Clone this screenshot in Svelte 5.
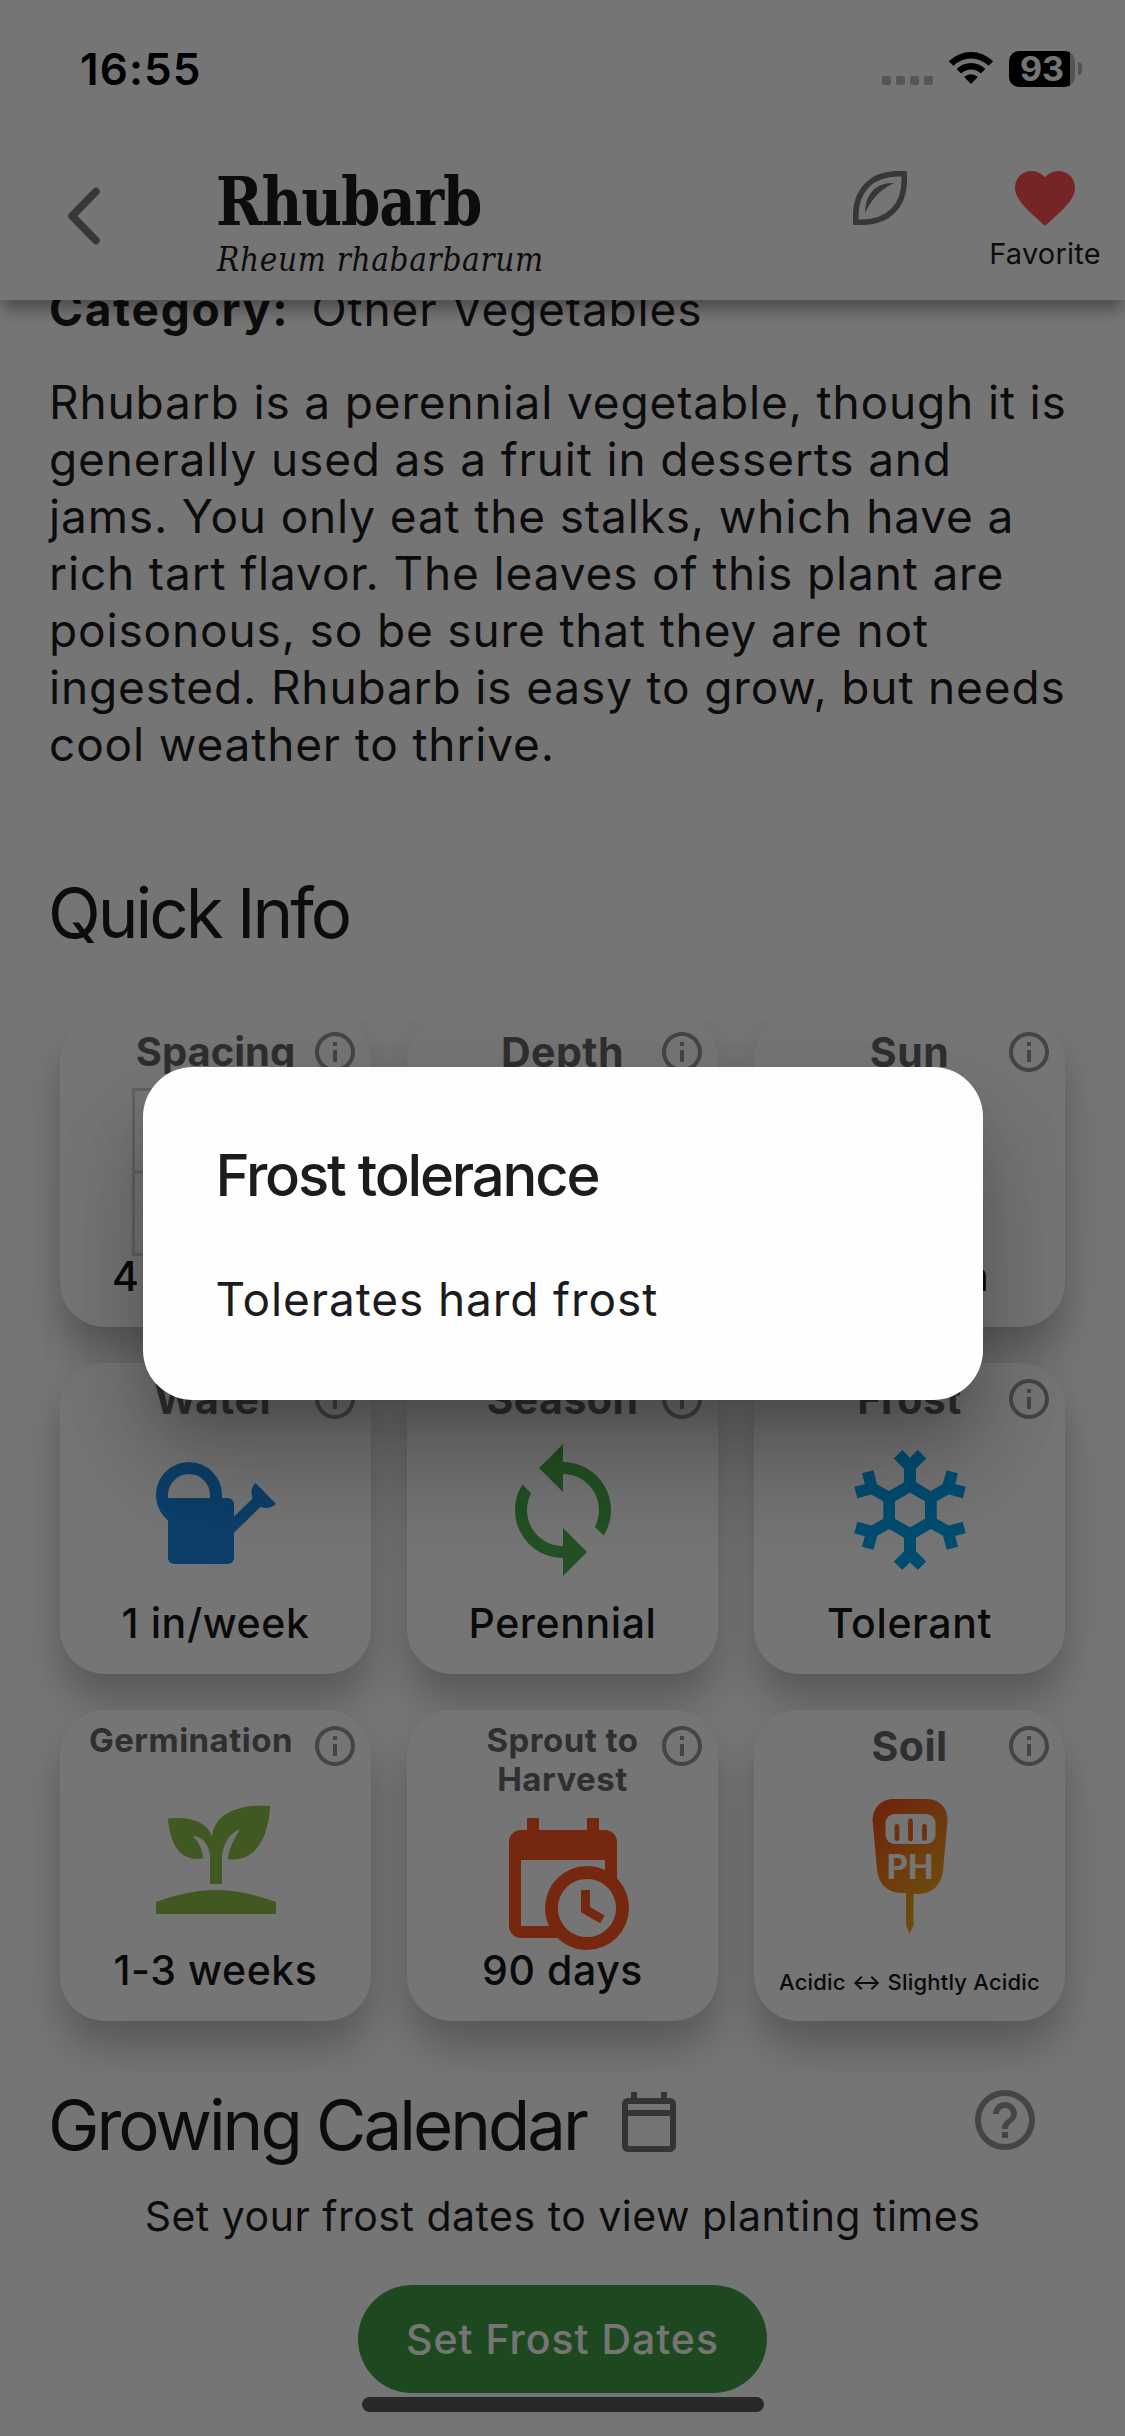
<script lang="ts">
  type Card = {
    title: string
    value: string
    icon: string
    color?: string
    small?: boolean
    tiny?: boolean
    shift?: boolean
    tight?: boolean
  }

  const cards: Card[] = [
    { title: "Spacing", value: "4 per sq ft", icon: "grid", tight: true },
    { title: "Depth", value: "", icon: "" },
    { title: "Sun", value: "Full Sun", icon: "" },
    { title: "Water", value: "1 in/week", icon: "water", color: "#1e8ae6" },
    { title: "Season", value: "Perennial", icon: "season", color: "#4caf50" },
    { title: "Frost", value: "Tolerant", icon: "frost", color: "#03a9f4" },
    { title: "Germination", value: "1-3 weeks", icon: "sprout", color: "#8bc34a", small: true, shift: true },
    { title: "Sprout to Harvest", value: "90 days", icon: "harvest", color: "#ff5722", small: true },
    { title: "Soil", value: "Acidic ↔ Slightly Acidic", icon: "ph", tiny: true },
  ]

  const paths: Record<string, string> = {
    water:
      "M7.5 4A5.5 5.5 0 0 0 4 13.74V20a1 1 0 0 0 1 1h9a1 1 0 0 0 1-1v-4.2l4.4-4.3q1.5.5 2.6-.5L18.6 7.5q-1.1 1.1-.5 2.6L15 13.1V11a1 1 0 0 0-1-1h-1v-.5A5.5 5.5 0 0 0 7.5 4M7.5 6A3.5 3.5 0 0 1 11 9.5v.5H4v-.5A3.5 3.5 0 0 1 7.5 6",
    season:
      "M12 4V1L8 5l4 4V6c3.31 0 6 2.69 6 6 0 1.01-.25 1.97-.7 2.8l1.46 1.46C19.54 15.03 20 13.57 20 12c0-4.42-3.58-8-8-8zm0 14c-3.31 0-6-2.69-6-6 0-1.01.25-1.97.7-2.8L5.24 7.74C4.46 8.97 4 10.43 4 12c0 4.42 3.58 8 8 8v3l4-4-4-4v3z",
    frost:
      "M20.79,13.95L18.46,14.57L16.46,13.44V10.56L18.46,9.43L20.79,10.05L21.31,8.12L19.54,7.65L20,5.88L18.07,5.36L17.45,7.69L15.45,8.82L13,7.38V5.12L14.71,3.41L13.29,2L12,3.29L10.71,2L9.29,3.41L11,5.12V7.38L8.5,8.82L6.5,7.69L5.92,5.36L4,5.88L4.47,7.65L2.7,8.12L3.22,10.05L5.55,9.43L7.55,10.56V13.45L5.55,14.58L3.22,13.96L2.7,15.89L4.47,16.36L4,18.12L5.93,18.64L6.55,16.31L8.55,15.18L11,16.62V18.88L9.29,20.59L10.71,22L12,20.71L13.29,22L14.7,20.59L13,18.88V16.62L15.5,15.17L17.5,16.3L18.12,18.63L20,18.12L19.53,16.35L21.3,15.88L20.79,13.95M9.5,10.56L12,9.11L14.5,10.56V13.44L12,14.89L9.5,13.44V10.56Z",
    sprout:
      "M2,22V20C2,20 7,18 12,18C17,18 22,20 22,20V22H2M11.3,9.1C10.1,5.2 4,6.1 4,6.1C4,6.1 4.2,13.9 9.9,12.7C9.5,9.8 8,9 8,9C10.8,9 11,12.4 11,12.4V17C11.3,17 11.7,17 12,17C12.3,17 12.7,17 13,17V12.8C13,12.8 13,8.9 16,7.9C16,7.9 14,10.9 14,12.9C21,13.6 21,4 21,4C21,4 12.1,3 11.3,9.1Z",
    harvest:
      "M15,13H16.5V15.82L18.94,17.23L18.19,18.53L15,16.69V13M19,8H5V19H9.67C9.24,18.09 9,17.07 9,16A7,7 0 0,1 16,9C17.07,9 18.09,9.24 19,9.67V8M5,21C3.89,21 3,20.1 3,19V5C3,3.89 3.89,3 5,3H6V1H8V3H16V1H18V3H19A2,2 0 0,1 21,5V11.1C22.24,12.36 23,14.09 23,16A7,7 0 0,1 16,23C14.09,23 12.36,22.24 11.1,21H5M16,11.15A4.85,4.85 0 0,0 11.15,16C11.15,18.68 13.32,20.85 16,20.85A4.85,4.85 0 0,0 20.85,16C20.85,13.32 18.68,11.15 16,11.15Z",
  }
</script>

<div class="screen">
  <header>
    <div class="status">
      <span class="time">16:55</span>
      <div class="signals">
        <div class="dots"><i></i><i></i><i></i><i></i></div>
        <svg class="wifi" width="46" height="34" viewBox="0 0 46 34">
          <path d="M0.8 10.2a31.5 31.5 0 0 1 44.4 0l-4.6 4.6a25 25 0 0 0-35.2 0z" />
          <path d="M8.6 18a20.4 20.4 0 0 1 28.8 0l-4.6 4.6a13.9 13.9 0 0 0-19.6 0z" />
          <path d="M16.2 26a9.8 9.8 0 0 1 13.6 0L23 33z" />
        </svg>
        <div class="battery"><span>93</span></div>
        <div class="nub"></div>
      </div>
    </div>
    <div class="nav">
      <svg class="back" width="38" height="64" viewBox="0 0 38 64">
        <path d="M32 7.500L8 32L32 56.500" fill="none" stroke="#797979" stroke-width="7.600" stroke-linecap="round" stroke-linejoin="round" />
      </svg>
      <div class="names">
        <h1>Rhubarb</h1>
        <p>Rheum rhabarbarum</p>
      </div>
      <svg class="leaf" width="54" height="54" viewBox="0 0 54 54">
        <path d="M2.9 51.1C.5 20 18 .5 51.1 2.9C53.5 34 36 53.5 2.9 51.1z" fill="none" stroke="#797979" stroke-width="5.6" />
        <path d="M12.3 41.7C12 23 23 11 41.3 12C30 17 20 25 12.3 41.7z" fill="#797979" />
      </svg>
      <div class="favorite">
        <svg width="72" height="72" viewBox="0 0 24 24">
          <path fill="#ff5252" d="M12 21.35l-1.45-1.32C5.4 15.36 2 12.28 2 8.5 2 5.42 4.42 3 7.5 3c1.74 0 3.41.81 4.5 2.09C13.09 3.81 14.76 3 16.5 3 19.58 3 22 5.42 22 8.5c0 3.78-3.4 6.86-8.55 11.54L12 21.35z" />
        </svg>
        <span>Favorite</span>
      </div>
    </div>
  </header>

  <main>
    <p class="category"><b>Category:</b><span>Other Vegetables</span></p>
    <p class="about">
      Rhubarb is a perennial vegetable, though it is<br />generally used as a fruit in desserts and<br />jams. You only eat the stalks, which have a<br />rich tart flavor. The leaves of this plant are<br />poisonous, so be sure that they are not<br />ingested. Rhubarb is easy to grow, but needs<br />cool weather to thrive.
    </p>

    <h2 class="quick">Quick Info</h2>

    <div class="cards">
      {#each cards as card}
        <section class="card">
          <h3 class:small={card.small} class:shift={card.shift} class:tight={card.tight}>{card.title}</h3>
          <svg class="info" width="48" height="48" viewBox="0 0 24 24">
            <path d="M11 7h2v2h-2zm0 4h2v6h-2zm1-9C6.48 2 2 6.48 2 12s4.48 10 10 10 10-4.48 10-10S17.52 2 12 2zm0 18c-4.41 0-8-3.59-8-8s3.59-8 8-8 8 3.59 8 8-3.59 8-8 8z" />
          </svg>
          <div class="picture">
            {#if card.icon === "grid"}
              <svg class="grid" width="168" height="168" viewBox="0 0 168 168" fill="none" stroke="#d6d6d6" stroke-width="3">
                <path d="M1.5 1.5h165v165h-165zM1.5 84h165M84 1.5v165" />
              </svg>
            {:else if card.icon === "ph"}
              <svg class="ph" width="80" height="138" viewBox="0 0 80 138">
                <defs>
                  <linearGradient id="meter" gradientUnits="userSpaceOnUse" x1="5" y1="15" x2="75" y2="85">
                    <stop offset="0" stop-color="#f0501e" />
                    <stop offset="0.5" stop-color="#f07c1e" />
                    <stop offset="1" stop-color="#eda01e" />
                  </linearGradient>
                </defs>
                <path fill="url(#meter)" d="M22 1H58Q77 3 77.500 22L73 73Q70 94 50 96H43.500V127L39.500 135.500L36 127V95H30Q9 93 7 71L2.500 22Q4 3 22 1z" />
                <rect x="15.500" y="16" width="50" height="30" rx="9" fill="#fff" />
                <path d="M27 28.500v12M40.500 23v18M54.500 28.500v12" stroke="#ef6c20" stroke-width="4.800" stroke-linecap="round" />
                <text x="40" y="81" text-anchor="middle">PH</text>
              </svg>
            {:else if card.icon}
              <svg width="144" height="144" viewBox="0 0 24 24" fill={card.color}>
                <path fill-rule="evenodd" d={paths[card.icon]} />
              </svg>
            {/if}
          </div>
          {#if card.value}
            <p class="value" class:tiny={card.tiny}>{card.value}</p>
          {/if}
        </section>
      {/each}
    </div>

    <div class="calendar">
      <h2>Growing Calendar</h2>
      <svg class="cal" width="72" height="72" viewBox="0 0 24 24" fill="#757575">
        <path d="M19 3h-1V1h-2v2H8V1H6v2H5c-1.100 0-2 .9-2 2v14c0 1.100.9 2 2 2h14c1.100 0 2-.9 2-2V5c0-1.100-.9-2-2-2zm0 16H5V9h14v10zm0-12H5V5h14v2z" />
      </svg>
      <svg class="help" width="72" height="72" viewBox="0 0 24 24" fill="#979797">
        <path d="M11 18h2v-2h-2v2zm1-16C6.480 2 2 6.480 2 12s4.480 10 10 10 10-4.480 10-10S17.520 2 12 2zm0 18c-4.410 0-8-3.590-8-8s3.590-8 8-8 8 3.590 8 8-3.590 8-8 8zm0-14c-2.210 0-4 1.790-4 4h2c0-1.100.9-2 2-2s2 .9 2 2c0 2-3 1.750-3 5h2c0-2.250 3-2.500 3-5 0-2.210-1.790-4-4-4z" />
      </svg>
    </div>
    <p class="hint">Set your frost dates to view planting times</p>
    <button>Set Frost Dates</button>
    <div class="home"></div>
  </main>

  <div class="scrim">
    <div class="dialog" role="dialog">
      <h4>Frost tolerance</h4>
      <p>Tolerates hard frost</p>
    </div>
  </div>
</div>

<style>
  :global(body) {
    margin: 0;
  }

  .screen {
    position: relative;
    display: flex;
    flex-direction: column;
    width: 1125px;
    height: 2436px;
    overflow: hidden;
    background: #fff;
    color: #1c1c1e;
    font-family: Inter, "Liberation Sans", sans-serif;
  }

  h1, h2, h3, h4, p {
    margin: 0;
    font-weight: 400;
    white-space: nowrap;
  }

  svg {
    display: block;
    flex: none;
  }

  header {
    position: relative;
    z-index: 1;
    height: 300px;
    flex: none;
    background: #fff;
    box-shadow: 0 12px 15px -3px rgba(0, 0, 0, 0.36);
  }

  .status {
    display: flex;
    justify-content: space-between;
    height: 138px;
    padding: 0 43px 0 80px;
    box-sizing: border-box;
  }

  .time {
    margin-top: 47px;
    font-size: 44px;
    line-height: 44px;
    font-weight: 600;
    letter-spacing: 1.1px;
    color: #000;
  }

  .signals {
    display: flex;
    margin-top: 51px;
    height: 36px;
  }

  .dots {
    display: flex;
    gap: 5px;
    margin: 25px 15px 0 0;
  }

  .dots i {
    width: 9px;
    height: 9px;
    border-radius: 2px;
    background: #bcbcbc;
  }

  .battery {
    width: 66px;
    height: 36px;
    margin-left: 15px;
    border-radius: 10px;
    background: linear-gradient(90deg, #000 61px, #b8b8b8 61px);
    color: #fff;
    font-size: 34px;
    line-height: 36px;
    font-weight: 700;
    text-align: center;
  }

  .nub {
    width: 4px;
    height: 13px;
    margin: 11px 0 0 3px;
    border-radius: 0 6px 6px 0;
    background: #b8b8b8;
  }

  .nav {
    display: flex;
  }

  .back {
    margin: 46px 0 0 64px;
  }

  .names {
    width: 400px;
    margin: 24px 0 0 114px;
    font-family: "DejaVu Serif Condensed", "DejaVu Serif", serif;
    font-stretch: condensed;
  }

  .names h1 {
    font-size: 68px;
    line-height: 78px;
    font-weight: 700;
    letter-spacing: -1.3px;
    transform: scaleX(0.92);
    transform-origin: left;
  }

  .names p {
    margin-left: 1px;
    font-size: 33px;
    line-height: 40px;
    font-style: italic;
    letter-spacing: 0.65px;
  }

  .leaf {
    margin: 33px 0 0 237px;
  }

  .favorite {
    display: flex;
    flex-direction: column;
    align-items: center;
    width: 110px;
    margin: 24px 0 0 83px;
  }

  .favorite span {
    margin-top: 2px;
    font-size: 29px;
    line-height: 36px;
    letter-spacing: 0.2px;
  }

  main {
    flex: 1;
    min-height: 0;
    overflow: hidden;
    display: flex;
    flex-direction: column;
  }

  .category,
  .about {
    padding-left: 49px;
    font-size: 46px;
    line-height: 57px;
    letter-spacing: 0.85px;
  }

  .category {
    margin-top: -19px;
  }

  .category b {
    margin-right: 22px;
    font-weight: 700;
    letter-spacing: 1.8px;
  }

  .about {
    margin-top: 36px;
  }

  h2 {
    font-size: 69px;
    line-height: 84px;
    letter-spacing: -3px;
  }

  .quick {
    margin: 98px 0 61px 48px;
  }

  .cards {
    display: grid;
    grid-template-columns: repeat(3, 311px);
    grid-auto-rows: 311px;
    gap: 36px;
    margin-left: 60px;
  }

  .card {
    position: relative;
    display: flex;
    flex-direction: column;
    align-items: center;
    border-radius: 45px;
    background: #fff;
    box-shadow: 0 27px 42px -2px rgba(0, 0, 0, 0.26);
  }

  h3 {
    padding-top: 12px;
    font-size: 41px;
    line-height: 48px;
    height: 51px;
    font-weight: 700;
    letter-spacing: 0.5px;
    text-align: center;
    color: #686868;
  }

  .tight {
    font-size: 40px;
    letter-spacing: 0;
  }

  .small {
    height: auto;
    max-width: 200px;
    padding-top: 11px;
    padding-bottom: 1px;
    font-size: 33px;
    line-height: 39px;
    white-space: normal;
  }

  .shift {
    max-width: none;
    margin-right: 49px;
    padding-bottom: 10px;
  }

  .info {
    position: absolute;
    top: 12px;
    right: 12px;
    fill: #979797;
  }

  .picture {
    display: flex;
    justify-content: center;
    margin-top: 12px;
    height: 144px;
  }

  .grid {
    margin-top: -3px;
  }

  .ph {
    margin-top: 13px;
  }

  .ph text {
    font-family: Lato, sans-serif;
    font-size: 34px;
    font-weight: 900;
    fill: #fff;
  }

  .value {
    position: absolute;
    bottom: 21px;
    font-size: 41px;
    line-height: 60px;
    letter-spacing: 0.6px;
    font-weight: 500;
    color: #161616;
  }

  .value.tiny {
    bottom: 9px;
    font-size: 22px;
    letter-spacing: 0.2px;
  }

  .calendar {
    display: flex;
    margin: 62px 84px 0 48px;
  }

  .cal {
    margin: 6px 0 0 27px;
  }

  .help {
    margin: 1px 0 0 auto;
  }

  .hint {
    margin-top: 19px;
    text-align: center;
    font-size: 41px;
    line-height: 60px;
    letter-spacing: 0.5px;
  }

  button {
    align-self: center;
    flex: none;
    width: 409px;
    height: 108px;
    margin-top: 39px;
    padding: 0;
    border: 0;
    border-radius: 54px;
    background: #43a047;
    color: #fff;
    font: 500 41px/108px Inter, sans-serif;
    letter-spacing: 1px;
  }

  .home {
    align-self: center;
    width: 402px;
    height: 15px;
    margin-top: 4px;
    border-radius: 8px;
    background: #585858;
    flex: none;
  }

  .scrim {
    position: absolute;
    inset: 0;
    z-index: 2;
    display: flex;
    align-items: center;
    justify-content: center;
    padding-top: 30px;
    background: rgba(0, 0, 0, 0.54);
  }

  .dialog {
    box-sizing: border-box;
    width: 840px;
    height: 333px;
    padding: 72px 73px;
    border-radius: 50px;
    background: #fefefe;
    box-shadow:
      0 33px 45px -21px rgba(0, 0, 0, 0.2),
      0 72px 100px 4px rgba(0, 0, 0, 0.16),
      0 36px 90px 6px rgba(0, 0, 0, 0.1);
  }

  .dialog h4 {
    font-size: 58px;
    line-height: 72px;
    font-weight: 500;
    letter-spacing: -2.2px;
  }

  .dialog p {
    margin-top: 60px;
    font-size: 46px;
    line-height: 57px;
    letter-spacing: 0.9px;
  }
</style>
